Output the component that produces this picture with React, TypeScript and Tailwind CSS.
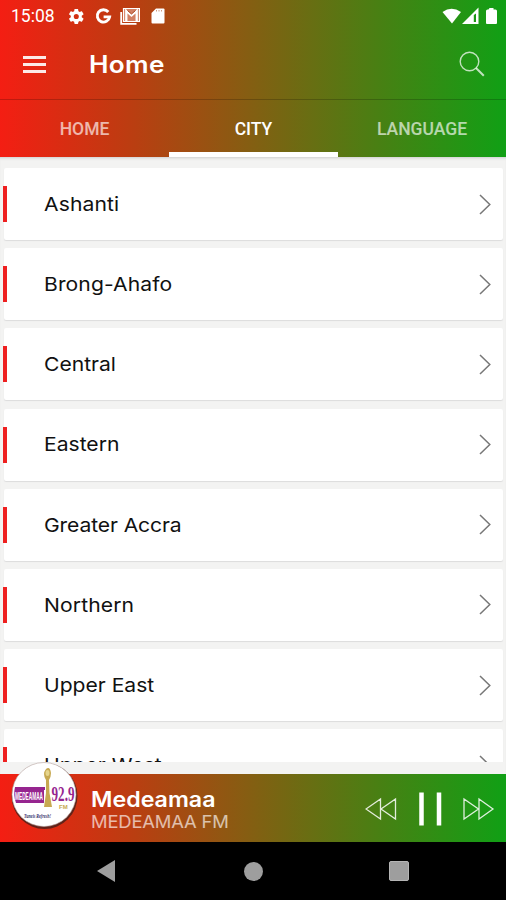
import React from "react";

const regions = [
  { name: "Ashanti", tracking: "tracking-[0.1px]" },
  { name: "Brong-Ahafo", tracking: "tracking-[0.1px]" },
  { name: "Central", tracking: "tracking-[0px]" },
  { name: "Eastern", tracking: "tracking-[0px]" },
  { name: "Greater Accra", tracking: "tracking-[-0.1px]" },
  { name: "Northern", tracking: "tracking-[0.1px]" },
  { name: "Upper East", tracking: "tracking-[0px]" },
  { name: "Upper West", tracking: "tracking-[0px]" },
];

const brand = "bg-[linear-gradient(90deg,#f41e13_0%,#bd3c11_25%,#835f12_50%,#488013_75%,#10a015_100%)]";

function StatusBar() {
  return (
    <div className="flex h-8 items-center justify-between pl-[11px] pr-[8px] text-white">
      <div className="flex items-center">
        <span className="w-[57px] font-['Roboto',sans-serif] text-[17.5px] leading-8">15:08</span>
        <svg width="17" height="17" viewBox="0 0 24 24" fill="currentColor">
          <path d="M19.4 13a7.500 7.500 0 0 0 0-2l2.300-1.700c.3-.2.300-.5.200-.8l-2.100-3.600c-.2-.3-.5-.4-.8-.3l-2.600 1.100a8 8 0 0 0-1.700-1L14.300 2c0-.4-.3-.6-.7-.6h-3.800c-.4 0-.6.200-.7.600l-.4 2.700a8 8 0 0 0-1.700 1L4.400 4.600c-.3-.1-.6 0-.8.300L1.500 8.500c-.1.300-.1.600.2.800L4 11a7.500 7.500 0 0 0 0 2l-2.300 1.700c-.3.200-.3.500-.2.800l2.100 3.600c.2.300.5.400.8.300L7 18.300a8 8 0 0 0 1.700 1l.4 2.700c.1.400.3.600.7.600h3.800c.4 0 .6-.2.700-.6l.4-2.700a8 8 0 0 0 1.700-1l2.600 1.100c.3.100.6 0 .8-.3l2.100-3.600c.1-.3.100-.6-.2-.8zM11.700 15.600a3.600 3.600 0 1 1 0-7.200 3.600 3.600 0 0 1 0 7.200z" />
        </svg>
        <svg className="ml-[10px]" width="17" height="17" viewBox="0 0 17 17" fill="none" stroke="currentColor" strokeWidth="2.900">
          <path d="M13.300 4A6.200 6.200 0 1 0 14.600 8.900H8.600" />
        </svg>
        <svg className="ml-[8px]" width="20" height="17" viewBox="0 0 20 17" fill="none" stroke="currentColor">
          <path d="M1.200 4v11.800h15.300" strokeWidth="1.800" />
          <path d="M3.500 .5h16v13h-16z" fill="#ffffff" fillOpacity=".35" strokeWidth="1.200" />
          <path d="M6.300 13.500V3l5.200 4.500L16.700 3v10.500" strokeWidth="2.300" />
          <path d="M7.500 2.500l4 3.500 4-3.500" stroke="#a94620" strokeWidth="1" />
        </svg>
        <svg className="ml-[11px]" width="14" height="16" viewBox="0 0 14 16" fill="currentColor">
          <path d="M5 .5h7.500q1 0 1 1v13q0 1-1 1h-11q-1 0-1-1V5z" />
          <path d="M5.500 2v1.500M8 2v1.500M10.500 2v1.500" stroke="#cf9a80" strokeWidth="1" />
        </svg>
      </div>
      <svg width="56" height="18" viewBox="0 0 56 18" fill="currentColor">
        <path d="M.5 5Q9.500 -1.500 19 5L10 16.500z" />
        <path fillRule="evenodd" d="M20 17L36.500 .5V17zM31.800 8v7h2.200V6.500z" />
        <path d="M47.500 1h4v1.500h2q1.500 0 1.500 1.500v12q0 1-1 1h-9q-1 0-1-1V4q0-1.500 1.500-1.500h1z" />
      </svg>
    </div>
  );
}

function Header() {
  return (
    <header className={`h-[157px] shrink-0 ${brand}`}>
      <StatusBar />
      <div className="flex h-[67px] items-center pb-[2px] pl-[23px] pr-[21px] text-white">
        <div className="flex w-[23px] flex-col gap-[4px]">
          <i className="h-[3px] bg-white/90" />
          <i className="h-[3px] bg-white/90" />
          <i className="h-[3px] bg-white/90" />
        </div>
        <h1 className="ml-[43px] flex-1 origin-left scale-x-[1.09] font-['Inter',sans-serif] text-[24px] font-semibold leading-8 tracking-[0.3px]">Home</h1>
        <svg className="mb-[1px]" width="26" height="26" viewBox="0 0 26 26" fill="none" stroke="#ffffff" strokeOpacity=".72" strokeWidth="1.400">
          <circle cx="10.500" cy="10.500" r="9.300" />
          <path d="M17 17l7.800 7.800" strokeWidth="2" />
        </svg>
      </div>
      <nav className="grid h-[58px] grid-cols-[169px_169px_168px] border-t border-black/20 text-center font-['Roboto',sans-serif] text-[17.500px] font-medium leading-[58px]">
        <span className="text-white/65">HOME</span>
        <span className="h-[57px] border-b-[5px] border-white text-white">CITY</span>
        <span className="text-white/65">LANGUAGE</span>
      </nav>
    </header>
  );
}

function RegionRow({ name, tracking }: { name: string; tracking: string }) {
  return (
    <li className="flex h-[72px] shrink-0 items-center rounded-[2px] bg-white pr-[12px] shadow-[0_1px_1px_#dcdcdc]">
      <i className="-ml-px h-9 w-1 bg-[#ee2020]" />
      <span className={`ml-[37px] flex-1 origin-left scale-x-[1.11] whitespace-nowrap pt-[2px] font-['Inter',sans-serif] text-[19px] text-[#111111] ${tracking}`}>{name}</span>
      <svg width="12" height="21" viewBox="0 0 12 21" fill="none" stroke="#777777" strokeWidth="1.500">
        <path d="M1 1l9.800 9.500L1 20" />
      </svg>
    </li>
  );
}

function StationLogo() {
  return (
    <svg className="absolute left-[10px] top-[-13px]" width="69" height="70" viewBox="0 0 69 70">
      <circle cx="34.500" cy="35" r="33" fill="#42201c" opacity=".8" />
      <circle cx="34" cy="33.500" r="32" fill="#ffffff" stroke="#b9a6a3" strokeWidth=".6" />
      <path d="M5 26h30v3h-1v13H6q-3-8-1-16z" fill="#96258f" />
      <text x="5" y="38.500" textLength="28" lengthAdjust="spacingAndGlyphs" fill="#ffffff" fontFamily="Liberation Sans, sans-serif" fontWeight="700" fontSize="10">MEDEAMAA</text>
      <path d="M36 8q4-3 5 4 0 4-2 7l.5 13 2.500 14h-8l2-14V19q-4-6 0-11z" fill="#c7a951" />
      <ellipse cx="37.500" cy="12" rx="2" ry="3" fill="#e6d58c" />
      <text x="41.500" y="40" fill="#96258f" fontFamily="Liberation Serif, serif" fontWeight="700" fontSize="21" textLength="23" lengthAdjust="spacingAndGlyphs">92.9</text>
      <text x="49" y="48" fill="#c7a951" fontFamily="Liberation Sans, sans-serif" fontWeight="700" fontSize="6">FM</text>
      <text x="14" y="56.500" fill="#322c69" fontFamily="Liberation Serif, serif" fontStyle="italic" fontWeight="700" fontSize="7" textLength="27" lengthAdjust="spacingAndGlyphs">Tuneis Refresh!</text>
    </svg>
  );
}

function Player() {
  return (
    <section className={`relative flex h-[68px] shrink-0 items-center pl-[91px] pr-[11px] text-white ${brand}`}>
      <StationLogo />
      <div className="flex-1 whitespace-nowrap pt-[4px] font-['Inter',sans-serif]">
        <div className="origin-left scale-x-[1.08] text-[21.500px] font-semibold leading-[25px] tracking-[0px]">Medeamaa</div>
        <div className="origin-left scale-x-[1.08] text-[17px] leading-[21px] tracking-[-0.150px] text-white/65">MEDEAMAA FM</div>
      </div>
      <svg className="mt-[2px]" width="130" height="36" viewBox="0 0 130 36" fill="none" stroke="#ffffff" strokeWidth="1.300">
        <path strokeOpacity=".85" d="M15.500 8v20L1 18zM30.500 8v20L16 18zM99 8v20l14.500-10zM114 8v20l14-10z" />
        <path strokeWidth="4.500" d="M56.500 1.500v33M74 1.500v33" />
      </svg>
    </section>
  );
}

export default function App() {
  return (
    <div className="flex h-[900px] w-[506px] flex-col overflow-hidden bg-[#f3f3f2]">
      <Header />
      <main className="h-[617px] shrink-0 shadow-[inset_0_3px_3px_-2px_#cccccc]">
        <ul className="flex h-[605px] flex-col gap-[8.200px] overflow-hidden pl-1 pr-[3px] pt-[11px]">
          {regions.map((region) => <RegionRow key={region.name} {...region} />)}
        </ul>
      </main>
      <Player />
      <footer className="flex h-[58px] shrink-0 items-center justify-between bg-black pl-[96px] pr-[97px]">
        <svg width="20" height="22" viewBox="0 0 20 22" fill="#9e9e9e"><path d="M19 0v22L1 11z" /></svg>
        <i className="ml-[1px] size-[19px] rounded-full bg-[#9e9e9e]" />
        <i className="size-[20px] rounded-[2px] border border-[#b5b5b5] bg-[#9e9e9e]" />
      </footer>
    </div>
  );
}
